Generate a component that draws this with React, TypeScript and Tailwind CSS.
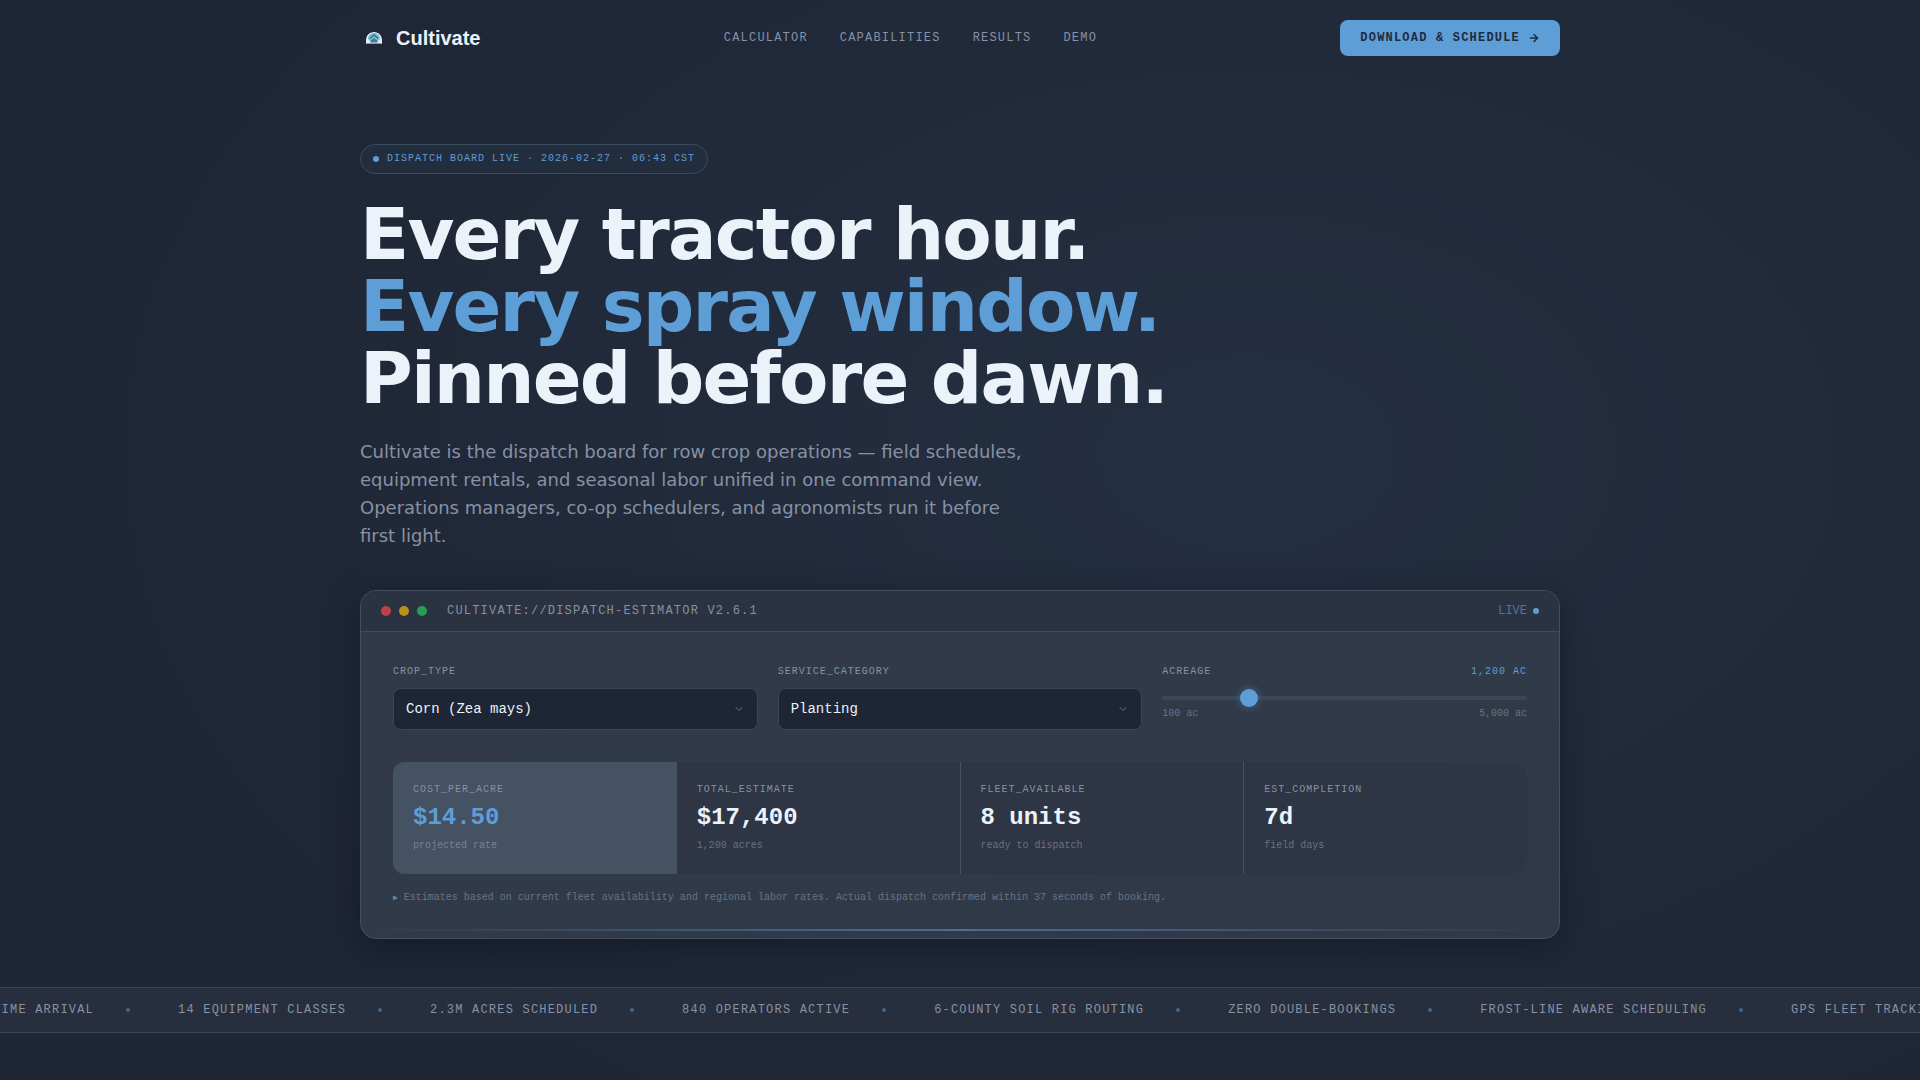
import { useState } from "react"
import { ArrowRight, ChevronDown } from "lucide-react"

const navLinks = [
  { label: "Calculator", href: "#calculator" },
  { label: "Capabilities", href: "#capabilities" },
  { label: "Results", href: "#results" },
  { label: "Demo", href: "#demo" },
]

const crops = [
  { name: "Corn (Zea mays)", factor: 1 },
  { name: "Soybean (Glycine max)", factor: 0.9 },
  { name: "Wheat (Triticum aestivum)", factor: 0.8 },
]

const services = [
  { name: "Planting", rate: 14.5, units: 8 },
  { name: "Spraying", rate: 9.25, units: 11 },
  { name: "Harvest", rate: 32, units: 5 },
]

const tickerItems = [
  "On-time arrival",
  "14 equipment classes",
  "2.3M acres scheduled",
  "840 operators active",
  "6-county soil rig routing",
  "Zero double-bookings",
  "Frost-line aware scheduling",
  "GPS fleet tracking",
]

function Logo() {
  return (
    <a href="#top" className="flex items-center gap-2">
      <svg viewBox="0 0 28 28" className="h-7 w-7" aria-hidden="true">
        <path d="M7 20a1 1 0 0 1-1-1v-2.500C6 11.500 9.500 8 14 8s8 3.500 8 8.500V19a1 1 0 0 1-1 1z" fill="#e3f0f7" />
        <path d="M8 15c0-3.500 2.500-6 6-6s6 2.500 6 6l-2.500 2.500h-7z" fill="#7fb9cd" />
        <path d="M10 14.500 14 11l4 3.500" fill="none" stroke="#35708a" strokeWidth="1.400" />
        <path d="M10.500 18.500V17L14 14l3.500 3v1.500z" fill="#3f7f9b" />
        <path d="M7 19.500h14" stroke="#8d9ba4" strokeWidth="1" />
      </svg>
      <span className="font-['Liberation_Sans',sans-serif] text-xl font-bold text-[#ebf2fb]">Cultivate</span>
    </a>
  )
}

function Navigation() {
  return (
    <header className="py-5">
      <div className="mx-auto flex max-w-[1200px] items-center justify-between">
        <Logo />
        <nav className="flex gap-8 text-xs uppercase tracking-widest text-[#8791a3]">
          {navLinks.map((link) => (
            <a key={link.href} href={link.href}>
              {link.label}
            </a>
          ))}
        </nav>
        <button
          type="button"
          className="flex items-center gap-2 rounded-lg bg-[#5e9ed7] px-5 py-2.5 text-xs font-bold uppercase tracking-widest text-[#1e2a40]"
        >
          Download &amp; Schedule
          <ArrowRight size={12} strokeWidth={3} />
        </button>
      </div>
    </header>
  )
}

function SelectField({
  id,
  label,
  options,
  value,
  onChange,
}: {
  id: string
  label: string
  options: string[]
  value: string
  onChange: (value: string) => void
}) {
  return (
    <div>
      <label htmlFor={id} className="block text-[10px] leading-4 uppercase tracking-widest text-[#8791a3]">
        {label}
      </label>
      <div className="relative mt-2">
        <select
          id={id}
          value={value}
          onChange={(e) => onChange(e.target.value)}
          className="block w-full appearance-none rounded-lg border border-[#3b4554] bg-[#1e2534] px-3 py-2.5 text-sm text-[#ebf2fb]"
        >
          {options.map((option) => (
            <option key={option}>{option}</option>
          ))}
        </select>
        <ChevronDown size={12} className="pointer-events-none absolute right-[13px] top-[15px] text-[#4a7a9c]" />
      </div>
    </div>
  )
}

function StatCell({ label, value, note, active = false }: { label: string; value: string; note: string; active?: boolean }) {
  return (
    <div className={active ? "bg-[#455264] p-5" : "bg-[#2e3544] p-5"}>
      <div className="text-[10px] leading-4 uppercase tracking-widest text-[#8791a3]">{label}</div>
      <div className={active ? "mt-1 text-2xl font-bold text-[#5e9ed7]" : "mt-1 text-2xl font-bold text-[#ebf2fb]"}>
        {value}
      </div>
      <div className={active ? "mt-1 text-[10px] leading-4 text-[#768293]" : "mt-1 text-[10px] leading-4 text-[#6a7383]"}>
        {note}
      </div>
    </div>
  )
}

function Estimator() {
  const [crop, setCrop] = useState(crops[0].name)
  const [service, setService] = useState(services[0].name)
  const [acres, setAcres] = useState(1200)

  const cropInfo = crops.find((c) => c.name === crop) ?? crops[0]
  const serviceInfo = services.find((s) => s.name === service) ?? services[0]
  const rate = serviceInfo.rate * cropInfo.factor
  const days = Math.ceil(acres / (serviceInfo.units * 22))

  return (
    <section
      id="calculator"
      className="relative mt-10 overflow-hidden rounded-2xl border border-[#454f5e] bg-linear-to-br from-[#323948] via-[#303a49] to-[#313847] shadow-[0_8px_32px_rgba(10,15,30,0.5)]"
    >
      <div className="flex items-center border-b border-[#414b5a] bg-[#2b3241] px-5 py-3 text-xs">
        <div className="flex gap-2">
          <span className="h-2.5 w-2.5 rounded-full bg-[#bc4245]" />
          <span className="h-2.5 w-2.5 rounded-full bg-[#b8921b]" />
          <span className="h-2.5 w-2.5 rounded-full bg-[#259e54]" />
        </div>
        <span className="ml-5 uppercase tracking-widest text-[#8791a3]">Cultivate://dispatch-estimator v2.6.1</span>
        <div className="ml-auto flex items-center gap-1.5 text-[#4c75a2]">
          LIVE
          <span className="h-1.5 w-1.5 rounded-full bg-[#5e9ed7]" />
        </div>
      </div>

      <div className="p-8">
        <div className="grid grid-cols-3 gap-5">
          <SelectField
            id="crop"
            label="crop_type"
            options={crops.map((c) => c.name)}
            value={crop}
            onChange={setCrop}
          />
          <SelectField
            id="service"
            label="service_category"
            options={services.map((s) => s.name)}
            value={service}
            onChange={setService}
          />
          <div>
            <div className="flex justify-between text-[10px] leading-4 uppercase tracking-widest">
              <label htmlFor="acreage" className="text-[#8791a3]">
                Acreage
              </label>
              <span className="text-[#5e9ed7]">{acres.toLocaleString("en-US")} ac</span>
            </div>
            <input
              id="acreage"
              type="range"
              min={100}
              max={5000}
              step={50}
              value={acres}
              onChange={(e) => setAcres(Number(e.target.value))}
              className="mt-4 block h-1 w-full appearance-none rounded-full bg-[#3c4655] [&::-webkit-slider-thumb]:h-[18px] [&::-webkit-slider-thumb]:w-[18px] [&::-webkit-slider-thumb]:appearance-none [&::-webkit-slider-thumb]:rounded-full [&::-webkit-slider-thumb]:bg-[#5e9ed7] [&::-webkit-slider-thumb]:shadow-[0_0_8px_rgba(91,155,213,0.5)]"
            />
            <div className="mt-1.5 flex justify-between text-[10px] leading-4 text-[#6a7383]">
              <span>100 ac</span>
              <span>5,000 ac</span>
            </div>
          </div>
        </div>

        <div className="mt-8 grid grid-cols-4 gap-px overflow-hidden rounded-xl bg-[#47505d]">
          <StatCell active label="cost_per_acre" value={`$${rate.toFixed(2)}`} note="projected rate" />
          <StatCell
            label="total_estimate"
            value={`$${Math.round(rate * acres).toLocaleString("en-US")}`}
            note={`${acres.toLocaleString("en-US")} acres`}
          />
          <StatCell label="fleet_available" value={`${serviceInfo.units} units`} note="ready to dispatch" />
          <StatCell label="est_completion" value={`${days}d`} note="field days" />
        </div>

        <p className="mt-4 text-[10px] leading-4 text-[#6a7383]">
          <span className="text-[8px] text-[#5489b9]">▶</span> Estimates based on current fleet availability and
          regional labor rates. Actual dispatch confirmed within 37 seconds of booking.
        </p>
      </div>

      {/* Scan line */}
      <div className="absolute inset-x-0 bottom-[7px] h-0.5 bg-linear-to-r from-transparent via-[#4b6e96] to-transparent" />
    </section>
  )
}

function Ticker() {
  return (
    <div className="mt-12 overflow-hidden border-y border-[#3d4655] bg-[#272f3e] py-3.5">
      <div className="-ml-8 flex w-max gap-12 text-xs uppercase tracking-widest text-[#8791a3]">
        {tickerItems.map((item) => (
          <div key={item} className="flex items-center gap-8">
            {item}
            <span className="h-1 w-1 rounded-full bg-[#41668f]" />
          </div>
        ))}
      </div>
    </div>
  )
}

export default function App() {
  return (
    <div
      id="top"
      className="min-h-screen overflow-hidden bg-[#1f2635] bg-[radial-gradient(ellipse_60%_70%_at_65%_42%,rgba(91,155,213,0.08),transparent)] font-['Liberation_Mono',monospace]"
    >
      <Navigation />
      <main>
        <div className="mx-auto max-w-[1200px] pt-17">
          <div className="flex w-fit items-center gap-2 rounded-full border border-[#384b5f] bg-[#222d3d] px-3 py-1.5 text-[10px] leading-4 uppercase tracking-widest text-[#5e9ed7]">
            <span className="h-1.5 w-1.5 rounded-full bg-[#5e9ed7]" />
            Dispatch board live · 2026-02-27 · 06:43 CST
          </div>
          <h1 className="mt-6 font-['DejaVu_Sans',sans-serif] text-7xl leading-none font-bold tracking-tight text-[#ebf2f9]">
            Every tractor hour.
            <br />
            <span className="text-[#5e9ed7]">Every spray window.</span>
            <br />
            Pinned before dawn.
          </h1>
          <p className="mt-6 max-w-2xl font-['DejaVu_Sans',sans-serif] text-lg leading-7 text-[#8791a3]">
            Cultivate is the dispatch board for row crop operations — field schedules, equipment rentals, and seasonal
            labor unified in one command view. Operations managers, co-op schedulers, and agronomists run it before
            first light.
          </p>
          <Estimator />
        </div>
        <Ticker />
      </main>
    </div>
  )
}
